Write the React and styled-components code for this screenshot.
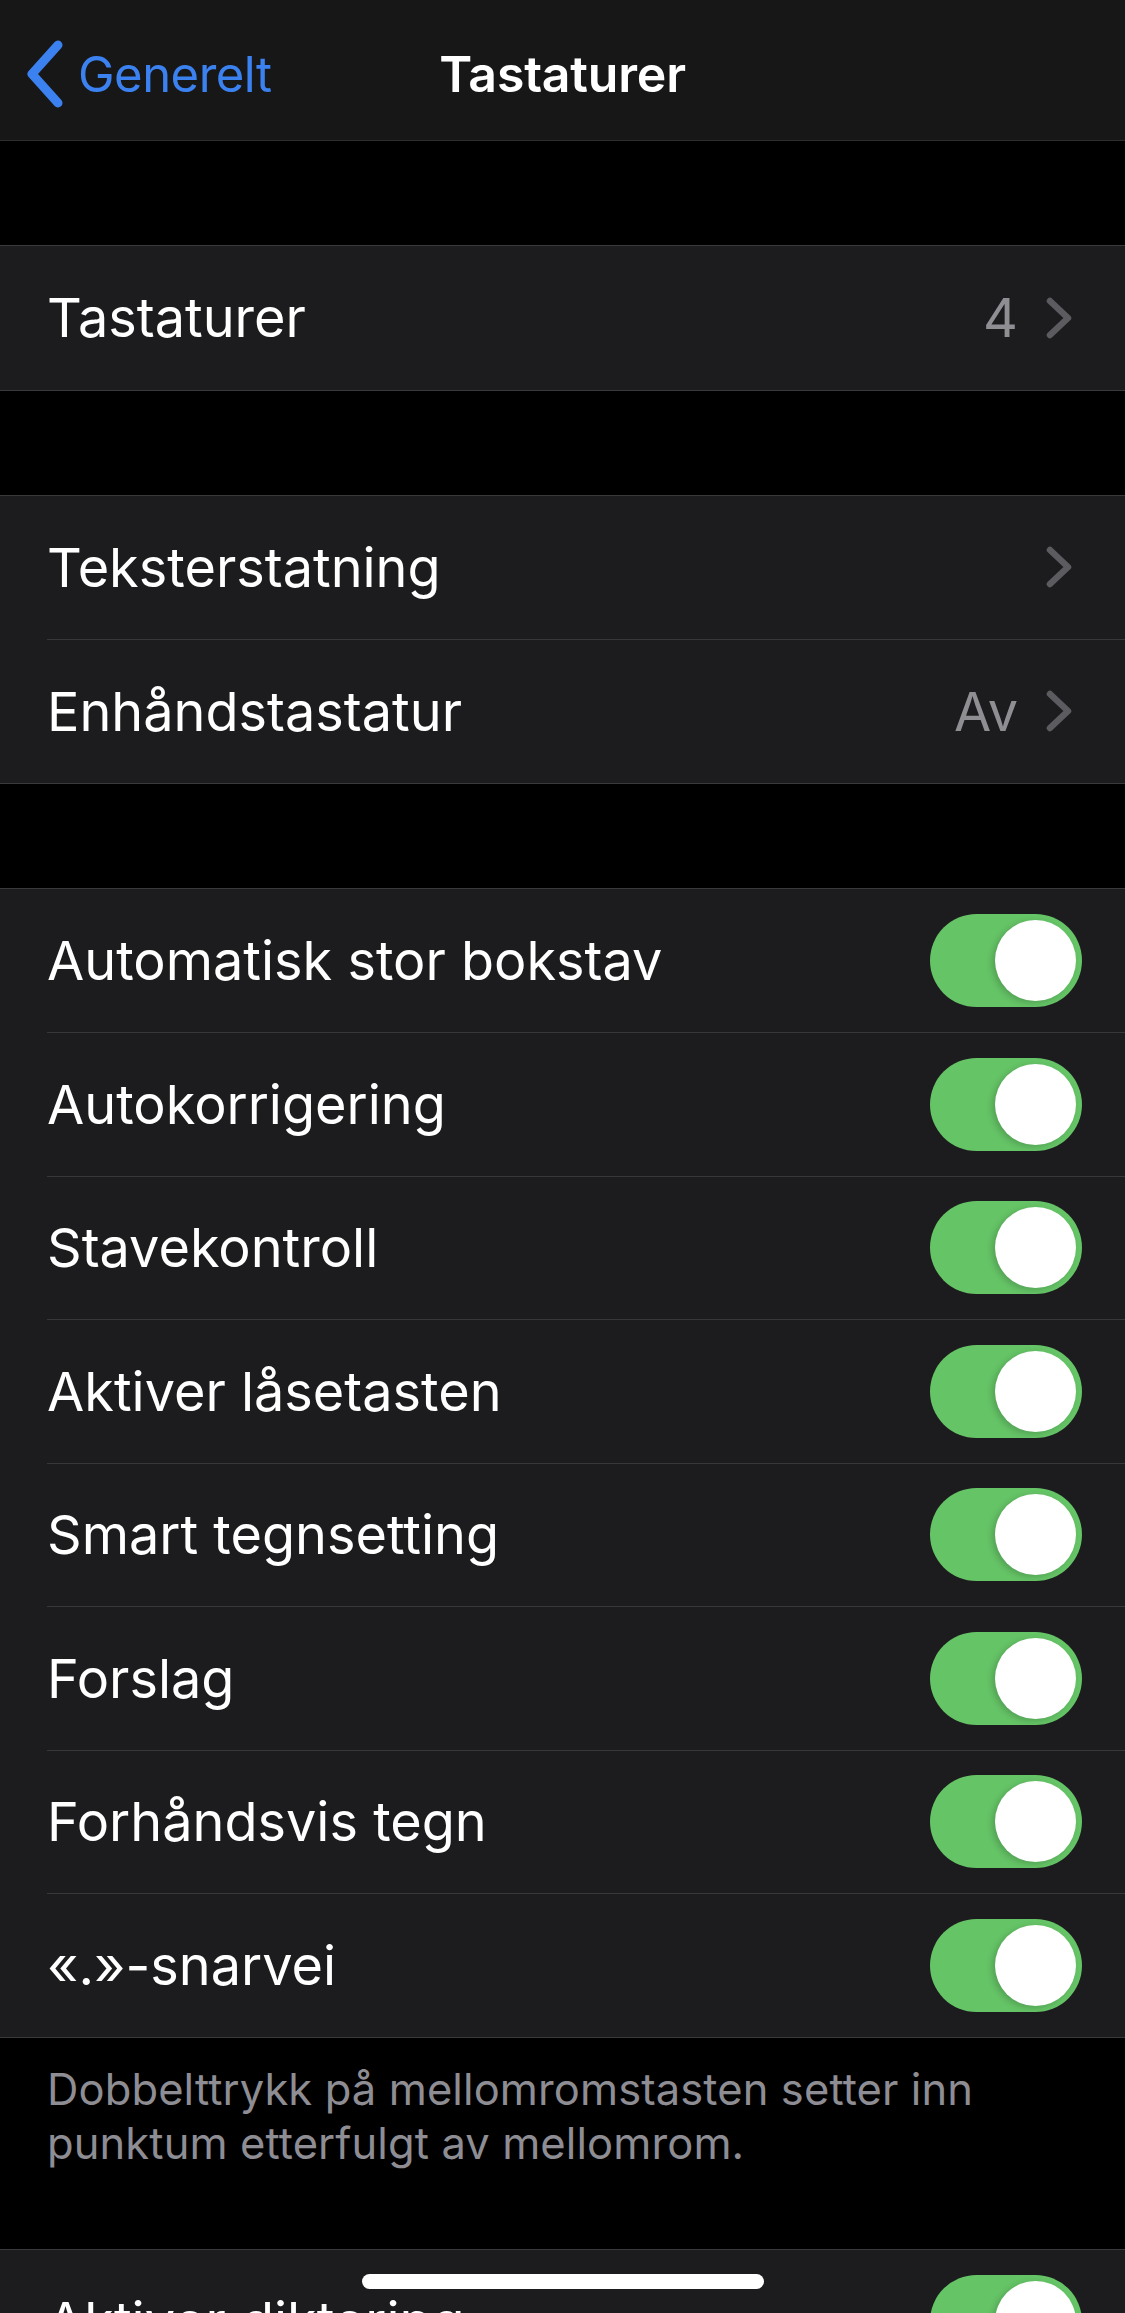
import React from 'react'
import styled, { createGlobalStyle } from 'styled-components'

const GlobalStyle = createGlobalStyle`
  html, body {
    margin: 0;
    padding: 0;
    background: #000;
  }
  body {
    font-family: 'Inter', 'Roboto', 'Noto Sans', sans-serif;
    -webkit-font-smoothing: antialiased;
  }
`;

const Screen = styled.div`
  width: 1125px;
  height: 2313px;
  background: #000;
  position: relative;
  overflow: hidden;
  display: flex;
  flex-direction: column;
`;

const NavBar = styled.header`
  height: 141px;
  box-sizing: border-box;
  padding-top: 8px;
  background: #171717;
  border-bottom: 1px solid #2e2e30;
  display: grid;
  grid-template-columns: 1fr auto 1fr;
  align-items: center;
  flex-shrink: 0;
`;

const BackButton = styled.div`
  display: flex;
  align-items: center;
  gap: 14px;
  padding-left: 26px;
  color: #3b82f0;
  font-size: 49px;
  letter-spacing: -0.5px;
`;

const NavTitle = styled.h1`
  margin: 0;
  color: #fff;
  font-size: 50px;
  font-weight: 600;
  letter-spacing: -0.2px;
`;

const GroupGap = styled.div`
  height: ${p => p.$h || 104}px;
  flex-shrink: 0;
`;

const Group = styled.section`
  background: #1c1c1e;
  border-top: 1px solid #3a3a3c;
  border-bottom: 1px solid #3a3a3c;
  flex-shrink: 0;
`;

const Row = styled.div`
  height: 143.5px;
  padding-left: 47px;
  display: flex;
  box-sizing: border-box;
`;

const RowInner = styled.div`
  flex: 1;
  display: flex;
  align-items: center;
  justify-content: space-between;
  padding-right: 45px;
  border-top: ${p => (p.$first ? 'none' : '1px solid #38383a')};
`;

const Label = styled.span`
  color: #fff;
  font-size: 54px;
  letter-spacing: 0;
`;

const Accessory = styled.div`
  display: flex;
  align-items: center;
  gap: 28px;
  padding-right: 7px;
`;

const Value = styled.span`
  color: #8e8e93;
  font-size: 54px;
`;

const Switch = styled.div`
  width: 152px;
  height: 93px;
  border-radius: 47px;
  background: #65c466;
  position: relative;
  flex-shrink: 0;
  margin-right: -2px;

  &::after {
    content: '';
    position: absolute;
    top: 6px;
    right: 6px;
    width: 81px;
    height: 81px;
    border-radius: 50%;
    background: #fff;
    box-shadow: -3px 2px 6px rgba(0, 0, 0, 0.18);
  }
`;

const Footer = styled.p`
  margin: 0;
  padding: 24px 47px 0 47px;
  height: 211px;
  box-sizing: border-box;
  color: #8d8d93;
  font-size: 43.5px;
  line-height: 54px;
  letter-spacing: 0.1px;
  flex-shrink: 0;
`;

const HomeIndicator = styled.div`
  position: absolute;
  left: 362px;
  top: 2274px;
  width: 402px;
  height: 15px;
  border-radius: 8px;
  background: #fff;
`;

const BackChevron = () => (
  <svg width="38" height="68" viewBox="0 0 38 68">
    <path d="M32 5 L6 34 L32 63" fill="none" stroke="#3b82f0" strokeWidth="9" strokeLinecap="round" strokeLinejoin="round" />
  </svg>
);

const Chevron = () => (
  <svg width="27" height="42" viewBox="0 0 27 42">
    <path d="M4 4 L22 21 L4 38" fill="none" stroke="#5c5c60" strokeWidth="6.5" strokeLinecap="round" strokeLinejoin="round" />
  </svg>
);

const LinkRow = ({ label, value, first }) => (
  <Row>
    <RowInner $first={first}>
      <Label>{label}</Label>
      <Accessory>
        {value && <Value>{value}</Value>}
        <Chevron />
      </Accessory>
    </RowInner>
  </Row>
);

const ToggleRow = ({ label, first }) => (
  <Row>
    <RowInner $first={first}>
      <Label>{label}</Label>
      <Switch />
    </RowInner>
  </Row>
);

const toggles = [
  'Automatisk stor bokstav',
  'Autokorrigering',
  'Stavekontroll',
  'Aktiver låsetasten',
  'Smart tegnsetting',
  'Forslag',
  'Forhåndsvis tegn',
  '«.»-snarvei',
];

const App = () => (
  <>
    <GlobalStyle />
    <Screen>
      <NavBar>
        <BackButton>
          <BackChevron />
          <span>Generelt</span>
        </BackButton>
        <NavTitle>Tastaturer</NavTitle>
        <div />
      </NavBar>

      <GroupGap />
      <Group>
        <LinkRow label="Tastaturer" value="4" first />
      </Group>

      <GroupGap />
      <Group>
        <LinkRow label="Teksterstatning" first />
        <LinkRow label="Enhåndstastatur" value="Av" />
      </Group>

      <GroupGap />
      <Group>
        {toggles.map((t, i) => (
          <ToggleRow key={t} label={t} first={i === 0} />
        ))}
      </Group>

      <Footer>
        Dobbelttrykk på mellomromstasten setter inn punktum etterfulgt av mellomrom.
      </Footer>

      <Group>
        <ToggleRow label="Aktiver diktering" first />
      </Group>

      <HomeIndicator />
    </Screen>
  </>
);

export default App
